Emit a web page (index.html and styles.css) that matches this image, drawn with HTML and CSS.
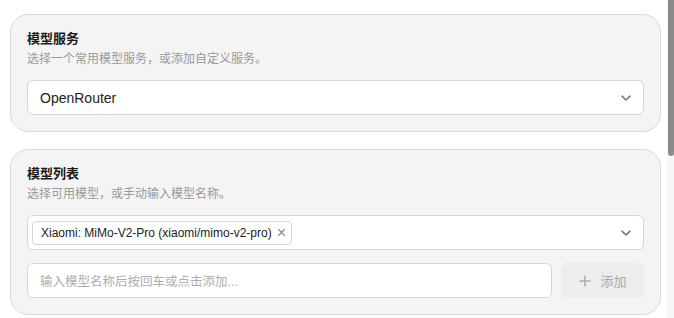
FILE: index.html
```html
<!DOCTYPE html>
<html lang="zh-CN">
<head>
    <meta charset="UTF-8">
    <meta name="viewport" content="width=device-width, initial-scale=1.0">
    <title>模型设置</title>
    <link rel="stylesheet" href="styles.css">
</head>
<body>
    <div class="frame">
        <div class="page">
            <div class="card">
                <div class="title">模型服务</div>
                <div class="desc">选择一个常用模型服务，或添加自定义服务。</div>
                <div class="select">
                    <span class="value">OpenRouter</span>
                    <svg class="chevron" width="14" height="14" viewBox="0 0 14 14"><path d="M3 5.2 L7 9 L11 5.2" fill="none" stroke="#777" stroke-width="1.6" stroke-linecap="round" stroke-linejoin="round"/></svg>
                </div>
            </div>
            <div class="card">
                <div class="title">模型列表</div>
                <div class="desc">选择可用模型，或手动输入模型名称。</div>
                <div class="select multi">
                    <span class="tag">Xiaomi: MiMo-V2-Pro (xiaomi/mimo-v2-pro)<span class="close">&times;</span></span>
                    <svg class="chevron" width="14" height="14" viewBox="0 0 14 14"><path d="M3 5.2 L7 9 L11 5.2" fill="none" stroke="#777" stroke-width="1.6" stroke-linecap="round" stroke-linejoin="round"/></svg>
                </div>
                <div class="add-row">
                    <div class="input">输入模型名称后按回车或点击添加...</div>
                    <div class="btn">
                        <svg width="14" height="14" viewBox="0 0 14 14"><path d="M7 1.5 V12.5 M1.5 7 H12.5" stroke="#aaa" stroke-width="1.5"/></svg>
                        <span>添加</span>
                    </div>
                </div>
            </div>
        </div>
        <div class="scrollbar"><div class="thumb"></div></div>
    </div>
</body>
</html>
```

FILE: styles.css
```css
* {
    padding: 0;
    margin: 0;
    box-sizing: border-box;
}
body {
    font-family: "Liberation Sans", "Noto Sans CJK SC", sans-serif;
    color: #1f1f1f;
    background: #fff;
    overflow: hidden;
}
.frame {
    display: flex;
    height: 100vh;
}
.page {
    flex: 1;
    padding: 14px 6px 0 10px;
    display: flex;
    flex-direction: column;
    gap: 17px;
    overflow: hidden;
}
.scrollbar {
    width: 7px;
    flex-shrink: 0;
    background: #f8f8f8;
    display: flex;
    flex-direction: column;
    padding-left: 1px;
}
.thumb {
    height: 156px;
    background: #8b8b8b;
    border-radius: 0 0 3px 3px;
}
.card {
    flex-shrink: 0;
    background: #f4f4f4;
    border: 1px solid #dadada;
    border-radius: 18px;
    padding: 15px 16px 16px;
}
.title {
    font-size: 13px;
    font-weight: bold;
    line-height: 18px;
    color: #1a1a1a;
    margin-bottom: 2px;
}
.desc {
    font-size: 12px;
    line-height: 18px;
    color: #9a9a9a;
}
.select {
    margin-top: 12px;
    height: 35px;
    background: #fff;
    border: 1px solid #d6d6d6;
    border-radius: 6px;
    display: flex;
    align-items: center;
    justify-content: space-between;
    padding: 0 10px 0 12px;
}
.select .value {
    font-size: 14px;
    color: #222;
}
.select.multi {
    padding-left: 4px;
}
.tag {
    display: flex;
    align-items: center;
    height: 24px;
    border: 1px solid #d6d6d6;
    border-radius: 4px;
    padding: 0 5px 0 8px;
    font-size: 12px;
    color: #222;
    gap: 5px;
}
.close {
    color: #888;
    font-size: 16px;
    line-height: 1;
}
.add-row {
    display: flex;
    gap: 9px;
    margin-top: 13px;
}
.input {
    flex: 1;
    height: 35px;
    background: #fff;
    border: 1px solid #d6d6d6;
    border-radius: 6px;
    padding: 0 12px;
    display: flex;
    align-items: center;
    font-size: 12.5px;
    color: #aeaeae;
}
.btn {
    width: 83px;
    height: 35px;
    background: #ededef;
    border-radius: 6px;
    display: flex;
    align-items: center;
    justify-content: center;
    gap: 8px;
    font-size: 13px;
    color: #aaa;
}
```
